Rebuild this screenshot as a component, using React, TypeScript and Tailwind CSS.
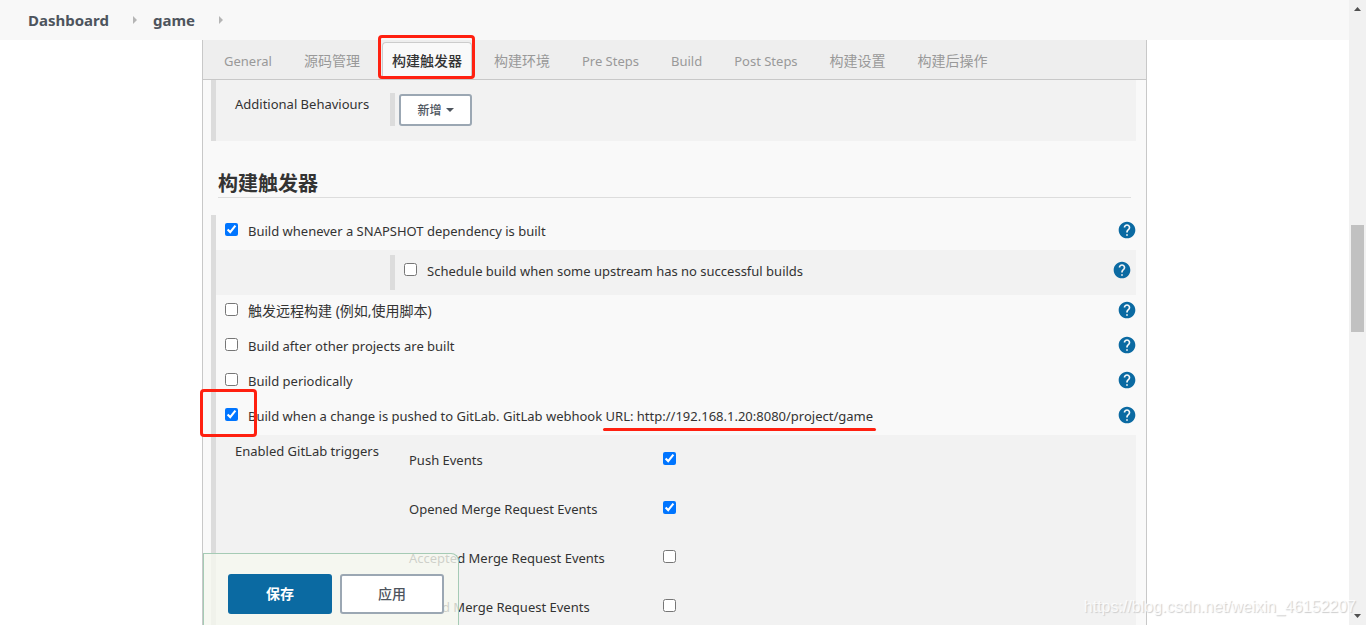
import { useState } from 'react'
import { MdHelp } from 'react-icons/md'

interface Tab {
  label: string
  cjk?: boolean
}

const tabs: Tab[] = [
  { label: 'General' },
  { label: '源码管理', cjk: true },
  { label: '构建触发器', cjk: true },
  { label: '构建环境', cjk: true },
  { label: 'Pre Steps' },
  { label: 'Build' },
  { label: 'Post Steps' },
  { label: '构建设置', cjk: true },
  { label: '构建后操作', cjk: true }
]

const ACTIVE_TAB = '构建触发器'

interface Option {
  id: string
  label: string
  cjk?: boolean
}

const simpleTriggers: Option[] = [
  { id: 'remote', label: '触发远程构建 (例如,使用脚本)', cjk: true },
  { id: 'after', label: 'Build after other projects are built' },
  { id: 'periodic', label: 'Build periodically' }
]

const gitlabEvents: Option[] = [
  { id: 'push', label: 'Push Events' },
  { id: 'opened', label: 'Opened Merge Request Events' },
  { id: 'accepted', label: 'Accepted Merge Request Events' },
  { id: 'closed', label: 'Closed Merge Request Events' }
]

function HelpButton() {
  return (
    <button aria-label="Help" className="h-5 w-5 shrink-0 text-[#0b6aa2]">
      <MdHelp className="h-5 w-5" />
    </button>
  )
}

interface CheckProps {
  id: string
  checked: boolean
  onToggle: (id: string) => void
}

function Check({ id, checked, onToggle }: CheckProps) {
  return (
    <input
      id={id}
      type="checkbox"
      checked={checked}
      onChange={() => onToggle(id)}
      className="m-0 h-[13px] w-[13px] shrink-0"
    />
  )
}

function Chevron() {
  return (
    <svg viewBox="0 0 4 8" className="ml-6 mr-4 h-2 w-1 fill-[#b5b5b5]">
      <path d="M0 0l4 4-4 4z" />
    </svg>
  )
}

export default function App() {
  const [checked, setChecked] = useState<string[]>(['snapshot', 'gitlab', 'push', 'opened'])

  const toggle = (id: string) => {
    setChecked(checked.includes(id) ? checked.filter(c => c !== id) : [...checked, id])
  }

  return (
    <div className="relative flex h-screen overflow-hidden bg-white font-['Noto_Sans','Noto_Sans_CJK_SC',sans-serif] text-[13px] leading-5 text-[#333]">
      <div className="flex min-w-0 flex-1 flex-col">
        {/* Breadcrumbs */}
        <nav className="flex h-10 shrink-0 items-center bg-[#f8f8f8] pl-7 text-[15px] font-bold text-[#4d545d]">
          <a href="#dashboard">Dashboard</a>
          <Chevron />
          <a href="#game">game</a>
          <Chevron />
        </nav>

        <main className="relative mx-auto flex min-h-0 w-full max-w-[945px] flex-1 flex-col border-x border-[#c8c8c8] bg-[#f9f9f9]">
          {/* Tabs */}
          <div className="flex h-10 shrink-0 items-end border-b border-[#c8c8c8] bg-[#eee] pl-[5px] text-[#999]">
            {tabs.map(tab =>
              tab.label === ACTIVE_TAB ? (
                <button
                  key={tab.label}
                  className="relative mx-1.5 h-[37px] whitespace-nowrap rounded-t border border-b-0 border-[#ccc] bg-[#f9f9f9] px-[9px] text-sm font-medium text-[#333]"
                >
                  {tab.label}
                  <span className="pointer-events-none absolute -left-[5px] -right-1 -top-2 bottom-0 rounded-sm border-3 border-[#ff2010]" />
                </button>
              ) : (
                <button
                  key={tab.label}
                  className={`h-[37px] whitespace-nowrap px-4 ${tab.cjk ? 'text-sm' : 'text-[13px]'}`}
                >
                  {tab.label}
                </button>
              )
            )}
          </div>

          <div className="flex min-h-0 flex-1 flex-col overflow-hidden pl-2 pr-[10px]">
            {/* Additional behaviours */}
            <div className="flex h-[61px] shrink-0 border-l-5 border-[#dcdcdc] bg-[#f2f2f2] pl-[19px]">
              <span className="w-[155px] pt-[14px]">Additional Behaviours</span>
              <div className="mt-[13px] h-[33px] border-l-5 border-[#dcdcdc] pl-1">
                <button className="mt-px flex h-8 w-[73px] items-center justify-center gap-1 rounded-[3px] border-2 border-[#9ba7b3] bg-white text-xs font-medium text-[#4d545d]">
                  <span className="pt-0.5">新增</span>
                  <svg viewBox="0 0 8 4" className="h-1 w-2 fill-current">
                    <path d="M0 0h8L4 4z" />
                  </svg>
                </button>
              </div>
            </div>

            <h2 className="ml-[7px] mr-[5px] mt-[29px] shrink-0 border-b border-[#ddd] text-xl font-bold leading-[27px]">
              构建触发器
            </h2>

            <div className="mt-[17px] shrink-0 border-l-5 border-[#dcdcdc]">
              <div className="-mr-px flex h-[35px] gap-[10px] pl-[9px] pt-[5px]">
                <span className="pt-[3px] leading-none">
                  <Check id="snapshot" checked={checked.includes('snapshot')} onToggle={toggle} />
                </span>
                <label htmlFor="snapshot" className="flex-1 pt-px">
                  Build whenever a SNAPSHOT dependency is built
                </label>
                <HelpButton />
              </div>

              <div className="bg-[#f2f2f2] py-[5px] pl-[174px] pr-1">
                <div className="flex h-[35px] gap-[10px] border-l-5 border-[#dcdcdc] pl-[9px]">
                  <span className="pt-2 leading-none">
                    <Check id="upstream" checked={checked.includes('upstream')} onToggle={toggle} />
                  </span>
                  <label htmlFor="upstream" className="flex-1 pt-1.5">
                    Schedule build when some upstream has no successful builds
                  </label>
                  <span className="pt-[5px]">
                    <HelpButton />
                  </span>
                </div>
              </div>

              {simpleTriggers.map(trigger => (
                <div key={trigger.id} className="-mr-px flex h-[35px] gap-[10px] pl-[9px] pt-[5px]">
                  <span className="pt-[3px] leading-none">
                    <Check id={trigger.id} checked={checked.includes(trigger.id)} onToggle={toggle} />
                  </span>
                  <label
                    htmlFor={trigger.id}
                    className={`flex-1 pt-px leading-5 ${trigger.cjk ? 'text-sm/5' : 'text-[13px]'}`}
                  >
                    {trigger.label}
                  </label>
                  <HelpButton />
                </div>
              ))}

              <div className="-mr-px flex h-[35px] gap-[10px] pl-[9px] pt-[5px]">
                <span className="pt-[3px] leading-none">
                  <Check id="gitlab" checked={checked.includes('gitlab')} onToggle={toggle} />
                </span>
                <label htmlFor="gitlab" className="flex-1 pt-px">
                  Build when a change is pushed to GitLab. GitLab webhook{' '}
                  <span className="relative">
                    URL: http://192.168.1.20:8080/project/game
                    <span className="pointer-events-none absolute -inset-x-[3px] -bottom-[6px] h-[3px] rounded-full bg-[#ff2010]" />
                  </span>
                </label>
                <HelpButton />
              </div>

              {/* GitLab events */}
              <div className="flex bg-[#f2f2f2] pl-[19px]">
                <span className="w-[174px] pt-1.5">Enabled GitLab triggers</span>
                <div>
                  {gitlabEvents.map(event => (
                    <div key={event.id} className="flex h-[49px] pt-[15px]">
                      <label htmlFor={event.id} className="w-[254px]">
                        {event.label}
                      </label>
                      <span className="pt-0.5 leading-none">
                        <Check id={event.id} checked={checked.includes(event.id)} onToggle={toggle} />
                      </span>
                    </div>
                  ))}
                </div>
              </div>
            </div>
          </div>

          {/* Highlight around the GitLab checkbox */}
          <div className="pointer-events-none absolute -left-[3px] top-[349px] h-12 w-[57px] rounded-sm border-3 border-[#ff2010]" />

          {/* Sticky save bar */}
          <div className="absolute bottom-0 left-0 flex gap-2 rounded-tr-lg border border-b-0 border-[#a5cbb5] bg-[#f5f8ef]/80 pb-[11px] pl-6 pr-[14px] pt-5 text-sm">
            <button className="h-10 w-[104px] rounded-[3px] bg-[#0b6aa2] font-bold text-white">保存</button>
            <button className="h-10 w-[104px] rounded-[3px] border-2 border-[#9ba7b3] bg-white font-medium text-[#4d545d]">
              应用
            </button>
          </div>
        </main>
      </div>

      {/* Scrollbar */}
      <div className="flex w-[17px] shrink-0 flex-col items-center bg-[#f1f1f1]">
        <svg viewBox="0 0 17 17" className="h-[17px] w-[17px] shrink-0 fill-[#505050]">
          <path d="M5 11h7L8.500 7z" />
        </svg>
        <div className="flex w-full flex-1 flex-col items-center">
          <div className="grow-208" />
          <div className="h-[107px] w-[13px] bg-[#c1c1c1]" />
          <div className="grow-276" />
        </div>
        <svg viewBox="0 0 17 17" className="h-[17px] w-[17px] shrink-0 fill-[#505050]">
          <path d="M5 6h7L8.500 10z" />
        </svg>
      </div>

      {/* Watermark */}
      <span className="pointer-events-none absolute bottom-2 right-[10px] font-['Liberation_Sans',sans-serif] text-base leading-5 text-white/80 [text-shadow:1px_1px_1px_#ccc]">
        https://blog.csdn.net/weixin_46152207
      </span>
    </div>
  )
}
